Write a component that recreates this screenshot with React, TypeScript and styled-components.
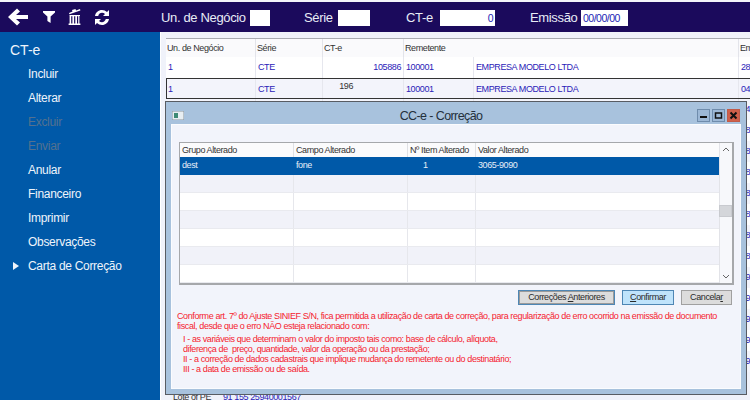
import React from 'react';
import styled, { createGlobalStyle } from 'styled-components';

const GlobalStyle = createGlobalStyle`
  html, body {
    margin: 0;
    padding: 0;
    overflow: hidden;
  }
  body {
    font-family: "Liberation Sans", "Noto Sans", sans-serif;
    background: #f0f2fa;
  }
`;

const Page = styled.div`
  position: relative;
  width: 750px;
  height: 400px;
  overflow: hidden;
  display: flex;
  flex-direction: column;
  border-top: 2px solid #f4f4fa;
  box-sizing: border-box;
`;

const TopBar = styled.header`
  height: 30px;
  flex: none;
  background: #1b0a5c;
  display: flex;
  align-items: center;
  color: #e8ecf6;
  font-size: 13px;
  letter-spacing: -0.35px;
`;

const IconGroup = styled.div`
  width: 161px;
  flex: none;
  display: flex;
  align-items: center;
  padding-left: 8px;
  box-sizing: border-box;
  svg {
    display: block;
    fill: #fff;
  }
`;

const FilterLabel = styled.span<{ $width: number }>`
  width: ${(p) => p.$width}px;
  flex: none;
  white-space: nowrap;
`;

const FilterInput = styled.div<{ $width: number; $gap: number; $left?: boolean }>`
  width: ${(p) => p.$width}px;
  margin: 1px ${(p) => p.$gap}px 0 0;
  height: 16px;
  flex: none;
  background: #fff;
  color: #1c22b4;
  font-size: 10.5px;
  letter-spacing: -0.5px;
  line-height: 16px;
  text-align: ${(p) => (p.$left ? 'left' : 'right')};
  padding: 0 2px;
  box-sizing: border-box;
`;

const Body = styled.div`
  flex: 1;
  display: flex;
  min-height: 0;
`;

const Sidebar = styled.nav`
  width: 160px;
  flex: none;
  background: #0059a8;
  color: #eef4fb;
  padding: 8px 0 0 10px;
  box-sizing: border-box;
`;

const SideTitle = styled.div`
  font-size: 14px;
  line-height: 20px;
  margin-bottom: 2px;
`;

const SideItem = styled.div<{ $disabled?: boolean }>`
  position: relative;
  height: 24px;
  line-height: 24px;
  font-size: 12px;
  letter-spacing: -0.3px;
  padding-left: 18px;
  white-space: nowrap;
  color: ${(p) => (p.$disabled ? '#54718f' : '#eef4fb')};
`;

const Caret = styled.span`
  position: absolute;
  left: 3px;
  top: 8px;
  width: 0;
  height: 0;
  border-left: 6px solid #eef4fb;
  border-top: 4px solid transparent;
  border-bottom: 4px solid transparent;
`;

const Content = styled.main`
  flex: 1;
  min-width: 0;
  padding: 6px 0 0 5px;
  background: #f0f2fa;
  border-left: 1px solid #fff;
  box-sizing: border-box;
  overflow: hidden;
`;

const GridTable = styled.div`
  border-top: 1px solid #a9abb2;
  font-size: 9px;
  letter-spacing: -0.4px;
  width: 600px;
`;

const GridRow = styled.div<{ $tall?: boolean; $white?: boolean; $selected?: boolean }>`
  display: grid;
  grid-template-columns: 90px 67px 81px 70px 265px 80px;
  height: ${(p) => (p.$tall ? 18 : 21)}px;
  line-height: ${(p) => (p.$tall ? 19 : 21)}px;
  background: ${(p) => (p.$white ? '#fff' : '#f3f4fb')};
  color: #2a22b8;
  box-sizing: border-box;
  ${(p) => (p.$selected ? 'outline: 1px solid #333; outline-offset: -1px; border-top: 1px solid #777;' : '')}
`;

const HeadCell = styled.div<{ $span?: number }>`
  color: #333;
  padding-left: 1px;
  border-right: 1px solid #e3e4ea;
  overflow: hidden;
  white-space: nowrap;
  background: #fafafc;
  grid-column: span ${(p) => p.$span ?? 1};
`;

const Cell = styled.div<{ $right?: boolean; $raised?: boolean }>`
  padding: 0 2px;
  border-right: 1px solid #e6e7ee;
  overflow: hidden;
  white-space: nowrap;
  text-align: ${(p) => (p.$right ? 'right' : 'left')};
  ${(p) => (p.$raised ? 'color: #333; line-height: 14px; padding-right: 50px;' : '')}
`;

const LoteRow = styled.div`
  display: flex;
  padding: 20px 0 0 7px;
  color: #2a22b8;
  white-space: nowrap;
  span:first-child {
    width: 50px;
    color: #333;
  }
`;

const Dialog = styled.section`
  position: absolute;
  left: 165px;
  top: 99px;
  width: 582px;
  height: 294px;
  background: #a8c2dd;
  border: 1px solid #585c63;
  box-sizing: border-box;
  display: flex;
  flex-direction: column;
  padding: 0 5px 5px;
`;

const TitleBar = styled.div`
  position: relative;
  height: 22px;
  flex: none;
  display: flex;
  align-items: center;
  justify-content: center;
  padding: 5px 30px 0 0;
  box-sizing: border-box;
  font-size: 12.5px;
  letter-spacing: -0.6px;
  color: #24303c;
`;

const AppGlyph = styled.svg`
  position: absolute;
  left: 1px;
  top: 9px;
`;

const WindowButtons = styled.div`
  position: absolute;
  right: 1px;
  top: 7px;
  display: flex;
  gap: 2px;
`;

const WindowButton = styled.div<{ $close?: boolean }>`
  width: 13px;
  height: 13px;
  background: ${(p) => (p.$close ? '#d0604a' : '#9db8d6')};
  border: 1px solid ${(p) => (p.$close ? '#c05a48' : '#6f8cac')};
  box-sizing: border-box;
  display: flex;
  align-items: center;
  justify-content: center;
`;

const DialogPanel = styled.div`
  flex: 1;
  min-height: 0;
  background: #f2f4fb;
  border: 1px solid #fbfcfe;
  box-sizing: border-box;
  padding: 17px 6px 0 7px;
  display: flex;
  flex-direction: column;
  font-size: 9px;
  letter-spacing: -0.4px;
`;

const ListBox = styled.div`
  height: 143px;
  flex: none;
  display: flex;
  background: #fff;
  border: 1px solid #a6a8ab;
  border-right-width: 2px;
  border-bottom-width: 2px;
  box-sizing: border-box;
`;

const ListColumn = styled.div`
  flex: 1;
  min-width: 0;
`;

const ListHead = styled.div`
  display: grid;
  grid-template-columns: 114px 114px 68px 245px;
  height: 14px;
  line-height: 14px;
  color: #333;
  background: #fbfbfc;
`;

const ListHeadCell = styled.div`
  padding-left: 2px;
  border-right: 1px solid #dfe0e4;
  white-space: nowrap;
  overflow: hidden;
`;

const ListRow = styled.div<{ $selected?: boolean; $tint?: boolean }>`
  display: grid;
  grid-template-columns: 114px 114px 68px 245px;
  height: 18px;
  line-height: 17px;
  color: ${(p) => (p.$selected ? '#e6eef8' : '#333')};
  background: ${(p) => (p.$selected ? '#0059a8' : p.$tint ? '#f1f2f9' : '#fff')};
  border-bottom: 1px solid ${(p) => (p.$selected ? '#0059a8' : '#e9eaef')};
  box-sizing: border-box;
`;

const ListCell = styled.div<{ $indent?: boolean; $plain?: boolean }>`
  padding-left: ${(p) => (p.$indent ? 15 : 2)}px;
  border-right: 1px solid ${(p) => (p.$plain ? 'transparent' : '#e6e7ec')};
  white-space: nowrap;
`;

const ScrollTrack = styled.div`
  width: 13px;
  flex: none;
  background: #f7f8fb;
  border-left: 1px solid #e2e3e8;
  display: flex;
  flex-direction: column;
  align-items: center;
  justify-content: space-between;
  box-sizing: border-box;
  padding: 4px 0;
`;

const ScrollThumb = styled.div`
  position: absolute;
  right: 0;
  top: 62px;
  width: 13px;
  height: 12px;
  background: #d4d6da;
  border: 1px solid #c8cacf;
  box-sizing: border-box;
`;

const ScrollArea = styled.div`
  position: relative;
  display: flex;
`;

const ButtonRow = styled.div`
  display: flex;
  justify-content: flex-end;
  gap: 7px;
  margin-top: 5px;
  padding-right: 2px;
`;

const ActionButton = styled.button<{ $width: number; $variant?: 'focus' | 'hover' }>`
  width: ${(p) => p.$width}px;
  height: 15px;
  padding: 0;
  font: inherit;
  letter-spacing: inherit;
  line-height: 13px;
  color: #2a2a2a;
  background: ${(p) => (p.$variant === 'hover' ? '#bfe3fb' : '#dcdcdc')};
  border: 1px solid ${(p) => (p.$variant ? '#4e86b4' : '#a0a0a0')};
  box-shadow: ${(p) => (p.$variant === 'focus' ? 'inset 0 0 0 1px #9a9a9a' : 'none')};
  u {
    text-decoration: underline;
  }
`;

const Notice = styled.div`
  margin: 6px 0 0 -2px;
  color: #f5232f;
  line-height: 10.3px;
`;

const NoticeList = styled.div`
  margin: 2px 0 0 6px;
`;

const Line = styled.div`
  white-space: pre;
`;

const BackIcon = () => (
  <svg width="20" height="18" viewBox="0 0 20 18" style={{ marginRight: 15 }}>
    <path d="M9 0.5 L12 3.5 L8 7 H20 V11 H8 L12 14.5 L9 17.5 L0 9 Z" />
  </svg>
);

const FunnelIcon = () => (
  <svg width="12" height="12" viewBox="0 0 12 12" style={{ marginRight: 13 }}>
    <path d="M0 0 H12 V1.5 L7.6 5.6 V12 L4.4 10 V5.6 L0 1.5 Z" />
  </svg>
);

const TrashIcon = () => (
  <svg width="13" height="16" viewBox="0 0 13 16" style={{ marginRight: 13 }}>
    <path d="M1 4 L4.5 2.6 L4 1 L7.5 0 L8 1.4 L12 0 L12.4 1.4 L1.4 5.2 Z" />
    <path d="M1.5 6 H12 V7 H11.4 V14.6 H12.4 V16 H0.6 V14.6 H1.6 V7 H1.5 Z M3.2 7.2 V14.6 H4.4 V7.2 Z M6.1 7.2 V14.6 H7.3 V7.2 Z M9 7.2 V14.6 H10.2 V7.2 Z" fillRule="evenodd" />
  </svg>
);

const RefreshIcon = () => (
  <svg width="16" height="15" viewBox="0 0 16 15">
    <path d="M1 6 C1.6 2.4 4.4 0 8 0 C10 0 11.6 .7 13 2 L15 0 V6 H9 L11 4 C10.2 3.2 9.2 2.8 8 2.8 C6.2 2.8 4.8 4 4.2 6 Z" />
    <path d="M15 9 C14.4 12.6 11.6 15 8 15 C6 15 4.4 14.3 3 13 L1 15 V9 H7 L5 11 C5.8 11.8 6.8 12.2 8 12.2 C9.8 12.2 11.2 11 11.8 9 Z" />
  </svg>
);

const ArrowGlyph = ({ down }: { down?: boolean }) => (
  <svg width="8" height="5" viewBox="0 0 8 5" style={{ display: 'block' }}>
    <path d={down ? 'M1 1 L4 4 L7 1' : 'M1 4 L4 1 L7 4'} fill="none" stroke="#666" strokeWidth="1" />
  </svg>
);

const sideItems = [
  { label: 'Incluir' },
  { label: 'Alterar' },
  { label: 'Excluir', disabled: true },
  { label: 'Enviar', disabled: true },
  { label: 'Anular' },
  { label: 'Financeiro' },
  { label: 'Imprimir' },
  { label: 'Observações' },
  { label: 'Carta de Correção', caret: true },
];

const hiddenDates = ['04', '28', '28', '28', '28', '28', '28', '28', '29', '29', '29', '29', '29'];

const App: React.FC = () => {
  const emptyRows = [1, 2, 3, 4, 5, 6];

  return (
    <Page>
      <GlobalStyle />
      <TopBar>
        <IconGroup>
          <BackIcon />
          <FunnelIcon />
          <TrashIcon />
          <RefreshIcon />
        </IconGroup>
        <FilterLabel $width={89}>Un. de Negócio</FilterLabel>
        <FilterInput $width={20} $gap={34} />
        <FilterLabel $width={34}>Série</FilterLabel>
        <FilterInput $width={32} $gap={36} />
        <FilterLabel $width={34}>CT-e</FilterLabel>
        <FilterInput $width={55} $gap={35}>0</FilterInput>
        <FilterLabel $width={51}>Emissão</FilterLabel>
        <FilterInput $width={47} $gap={0} $left>00/00/00</FilterInput>
      </TopBar>
      <Body>
        <Sidebar>
          <SideTitle>CT-e</SideTitle>
          {sideItems.map((item) => (
            <SideItem key={item.label} $disabled={item.disabled}>
              {item.caret && <Caret />}
              {item.label}
            </SideItem>
          ))}
        </Sidebar>
        <Content>
          <GridTable>
            <GridRow $tall $white>
              <HeadCell>Un. de Negócio</HeadCell>
              <HeadCell>Série</HeadCell>
              <HeadCell>CT-e</HeadCell>
              <HeadCell $span={2}>Remetente</HeadCell>
              <HeadCell>Emissão</HeadCell>
            </GridRow>
            <GridRow $white>
              <Cell>1</Cell>
              <Cell>CTE</Cell>
              <Cell $right>105886</Cell>
              <Cell>100001</Cell>
              <Cell>EMPRESA MODELO LTDA</Cell>
              <Cell>28/01/13</Cell>
            </GridRow>
            <GridRow $selected>
              <Cell>1</Cell>
              <Cell>CTE</Cell>
              <Cell $right $raised>196</Cell>
              <Cell>100001</Cell>
              <Cell>EMPRESA MODELO LTDA</Cell>
              <Cell>04/02/13</Cell>
            </GridRow>
            {hiddenDates.map((date, index) => (
              <GridRow key={index} $white={index % 2 === 1}>
                <Cell />
                <Cell />
                <Cell />
                <Cell />
                <Cell />
                <Cell>{date}</Cell>
              </GridRow>
            ))}
            <LoteRow>
              <span>Lote of PE</span>
              <span>91 155 25940001567</span>
            </LoteRow>
          </GridTable>
        </Content>
      </Body>
      <Dialog>
        <TitleBar>
          <AppGlyph width="12" height="9" viewBox="0 0 12 9">
            <rect x="0" y="0" width="12" height="9" fill="#e8eef2" stroke="#8a949c" />
            <rect x="2" y="2" width="4" height="5" fill="#3f8a74" />
          </AppGlyph>
          CC-e - Correção
          <WindowButtons>
            <WindowButton>
              <svg width="9" height="9" viewBox="0 0 9 9"><rect x="1" y="5" width="7" height="2" fill="#111" /></svg>
            </WindowButton>
            <WindowButton>
              <svg width="9" height="9" viewBox="0 0 9 9"><rect x="1.5" y="2" width="6" height="5" fill="none" stroke="#111" strokeWidth="1.5" /></svg>
            </WindowButton>
            <WindowButton $close>
              <svg width="9" height="9" viewBox="0 0 9 9"><path d="M1.5 1.5 L7.5 7.5 M7.5 1.5 L1.5 7.5" stroke="#111" strokeWidth="2" /></svg>
            </WindowButton>
          </WindowButtons>
        </TitleBar>
        <DialogPanel>
          <ListBox>
            <ListColumn>
              <ListHead>
                <ListHeadCell>Grupo Alterado</ListHeadCell>
                <ListHeadCell>Campo Alterado</ListHeadCell>
                <ListHeadCell>Nº Item Alterado</ListHeadCell>
                <ListHeadCell>Valor Alterado</ListHeadCell>
              </ListHead>
              <ListRow $selected>
                <ListCell $plain>dest</ListCell>
                <ListCell $plain>fone</ListCell>
                <ListCell $plain $indent>1</ListCell>
                <ListCell $plain>3065-9090</ListCell>
              </ListRow>
              {emptyRows.map((row) => (
                <ListRow key={row} $tint={row % 2 === 1}>
                  <ListCell />
                  <ListCell />
                  <ListCell />
                  <ListCell />
                </ListRow>
              ))}
            </ListColumn>
            <ScrollArea>
              <ScrollTrack>
                <ArrowGlyph />
                <ArrowGlyph down />
              </ScrollTrack>
              <ScrollThumb />
            </ScrollArea>
          </ListBox>
          <ButtonRow>
            <ActionButton $width={97} $variant="focus">Correções <u>A</u>nteriores</ActionButton>
            <ActionButton $width={52} $variant="hover"><u>C</u>onfirmar</ActionButton>
            <ActionButton $width={51}>Cancela<u>r</u></ActionButton>
          </ButtonRow>
          <Notice>
            <Line>Conforme art. 7º do Ajuste SINIEF S/N, fica permitida a utilização de carta de correção, para regularização de erro ocorrido na emissão de documento</Line>
            <Line>fiscal, desde que o erro NÃO esteja relacionado com:</Line>
            <NoticeList>
              <Line>I - as variáveis que determinam o valor do imposto tais como: base de cálculo, alíquota,</Line>
              <Line>diferença de  preço, quantidade, valor da operação ou da prestação;</Line>
              <Line>II - a correção de dados cadastrais que implique mudança do remetente ou do destinatário;</Line>
              <Line>III - a data de emissão ou de saída.</Line>
            </NoticeList>
          </Notice>
        </DialogPanel>
      </Dialog>
    </Page>
  );
};

export default App;
